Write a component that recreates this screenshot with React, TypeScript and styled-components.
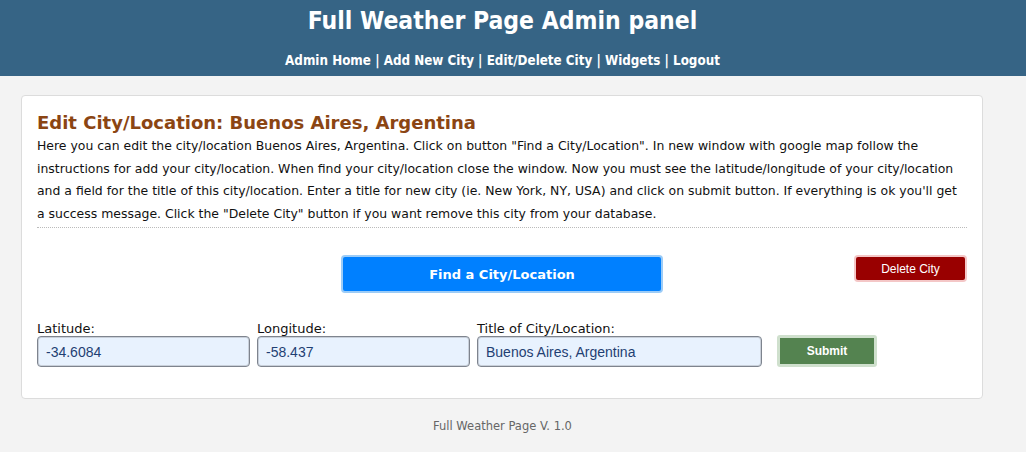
import React from 'react';
import styled, { createGlobalStyle } from 'styled-components';

const GlobalStyle = createGlobalStyle`
    body {
        margin: 0;
        background-color: #f3f3f3;
        font-family: "DejaVu Sans", Verdana, sans-serif;
    }
`;

const Header = styled.header`
    background-color: #366485;
    height: 76px;
    color: #fff;
    font-family: "DejaVu Sans Condensed", "DejaVu Sans", sans-serif;
    font-weight: bold;
    overflow: hidden;
`;

const HeaderInner = styled.div`
    width: 1005px;
    text-align: center;
`;

const SiteTitle = styled.h1`
    margin: 0;
    padding-top: 6px;
    font-size: 24.5px;
    line-height: 30px;
`;

const Nav = styled.nav`
    margin-top: 17px;
    font-size: 13.3px;
    & a {
        color: #fff;
        text-decoration: none;
    }
`;

const Card = styled.main`
    width: 930px;
    margin: 19px 0 0 21px;
    background-color: #fff;
    border: 1px solid #dcdcdc;
    border-radius: 4px;
    padding: 15px 15px 31px 15px;
`;

const Title = styled.h2`
    margin: 0;
    color: #8b4513;
    font-size: 18px;
    line-height: 24px;
`;

const Intro = styled.p`
    margin: 0;
    font-size: 12.45px;
    line-height: 22.5px;
    color: #111;
    padding-bottom: 2px;
    border-bottom: 1px dotted #bbb;
`;

const ButtonRow = styled.div`
    display: grid;
    grid-template-columns: 1fr auto 1fr;
    margin-top: 27px;
`;

const FindButton = styled.button`
    grid-column: 2;
    width: 322px;
    height: 38px;
    background-color: #0080ff;
    border: 2px solid #9cccf7;
    border-radius: 4px;
    color: #fff;
    font-family: "DejaVu Sans", Verdana, sans-serif;
    font-weight: bold;
    font-size: 13px;
`;

const DeleteButton = styled.button`
    grid-column: 3;
    justify-self: end;
    align-self: start;
    width: 113px;
    height: 27px;
    background-color: #990000;
    border: 2px solid #f4c7c7;
    border-radius: 4px;
    color: #fff;
    font-family: "Liberation Sans", Arial, sans-serif;
    font-size: 12px;
`;

const FormRow = styled.form`
    display: flex;
    align-items: flex-end;
    gap: 7px;
    margin-top: 28px;
`;

const Field = styled.label<{ $width: number }>`
    display: flex;
    flex-direction: column;
    width: ${p => p.$width}px;
    font-size: 13px;
    line-height: 15px;
    color: #111;
`;

const Input = styled.input`
    box-sizing: border-box;
    height: 31px;
    padding: 0 8px;
    background-color: #e8f2fe;
    border: 1px solid #7e848e;
    box-shadow: inset 0 0 0 1px #c9d0da;
    border-radius: 4px;
    color: #1f3f73;
    font-family: "Liberation Sans", Arial, sans-serif;
    font-size: 14px;
`;

const SubmitButton = styled.button`
    margin-left: 8px;
    width: 100px;
    height: 32px;
    background-color: #548350;
    border: 3px solid #cfe0cd;
    border-radius: 3px;
    color: #fff;
    font-family: "Liberation Sans", Arial, sans-serif;
    font-weight: bold;
    font-size: 12px;
`;

const Footer = styled.footer`
    width: 1005px;
    text-align: center;
    font-size: 11.5px;
    color: #666;
    margin-top: 20px;
`;

const App: React.FC = () => {
    const links = ['Admin Home', 'Add New City', 'Edit/Delete City', 'Widgets', 'Logout'];

    return (
        <>
            <GlobalStyle />
            <Header>
                <HeaderInner>
                    <SiteTitle>Full Weather Page Admin panel</SiteTitle>
                    <Nav>
                        {links.map((l, i) => (
                            <React.Fragment key={l}>
                                {i > 0 && ' | '}
                                <a href="#">{l}</a>
                            </React.Fragment>
                        ))}
                    </Nav>
                </HeaderInner>
            </Header>
            <Card>
                <Title>Edit City/Location: Buenos Aires, Argentina</Title>
                <Intro>
                    Here you can edit the city/location Buenos Aires, Argentina. Click on button "Find a City/Location". In new window with google map follow the instructions for add your city/location. When find your city/location close the window. Now you must see the latitude/longitude of your city/location and a field for the title of this city/location. Enter a title for new city (ie. New York, NY, USA) and click on submit button. If everything is ok you'll get a success message. Click the "Delete City" button if you want remove this city from your database.
                </Intro>
                <ButtonRow>
                    <FindButton type="button">Find a City/Location</FindButton>
                    <DeleteButton type="button">Delete City</DeleteButton>
                </ButtonRow>
                <FormRow onSubmit={e => e.preventDefault()}>
                    <Field $width={213}>
                        Latitude:
                        <Input defaultValue="-34.6084" />
                    </Field>
                    <Field $width={213}>
                        Longitude:
                        <Input defaultValue="-58.437" />
                    </Field>
                    <Field $width={285}>
                        Title of City/Location:
                        <Input defaultValue="Buenos Aires, Argentina" />
                    </Field>
                    <SubmitButton type="submit">Submit</SubmitButton>
                </FormRow>
            </Card>
            <Footer>Full Weather Page V. 1.0</Footer>
        </>
    );
};

export default App;
